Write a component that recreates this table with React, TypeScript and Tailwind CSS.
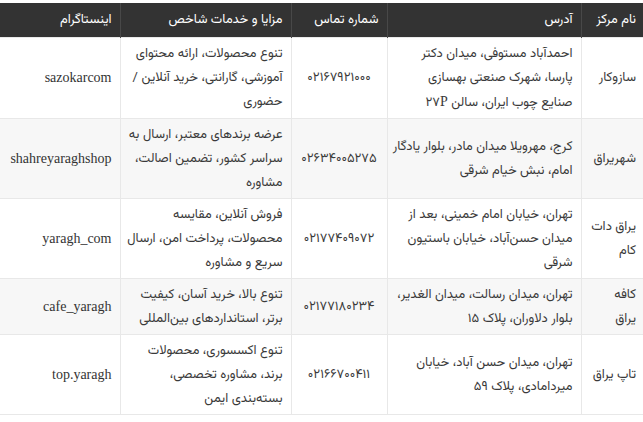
import React from "react";

type Row = {
  name: React.ReactNode[];
  address: React.ReactNode[];
  phone: string;
  features: string[];
  insta: string;
  grey?: boolean;
};

const rows: Row[] = [
  {
    name: ["سازوکار"],
    address: [
      "احمدآباد مستوفی، میدان دکتر",
      "پارسا، شهرک صنعتی بهسازی",
      <>
        صنایع چوب ایران، سالن ۲۷<span className="font-['Liberation_Serif',serif] text-[14px]">P</span>
      </>,
    ],
    phone: "۰۲۱۶۷۹۲۱۰۰۰",
    features: ["تنوع محصولات، ارائه محتوای", "آموزشی، گارانتی، خرید آنلاین /", "حضوری"],
    insta: "sazokarcom",
  },
  {
    name: ["شهریراق"],
    address: ["کرج، مهرویلا میدان مادر، بلوار یادگار", "امام، نبش خیام شرقی"],
    phone: "۰۲۶۳۴۰۰۵۲۷۵",
    features: ["عرضه برندهای معتبر، ارسال به", "سراسر کشور، تضمین اصالت،", "مشاوره"],
    insta: "shahreyaraghshop",
    grey: true,
  },
  {
    name: ["یراق دات", "کام"],
    address: ["تهران، خیابان امام خمینی، بعد از", "میدان حسن‌آباد، خیابان باستیون", "شرقی"],
    phone: "۰۲۱۷۷۴۰۹۰۷۲",
    features: ["فروش آنلاین، مقایسه", "محصولات، پرداخت امن، ارسال", "سریع و مشاوره"],
    insta: "yaragh_com",
  },
  {
    name: ["کافه", "یراق"],
    address: ["تهران، میدان رسالت، میدان الغدیر،", "بلوار دلاوران، پلاک ۱۵"],
    phone: "۰۲۱۷۷۱۸۰۲۳۴",
    features: ["تنوع بالا، خرید آسان، کیفیت", "برتر، استانداردهای بین‌المللی"],
    insta: "cafe_yaragh",
    grey: true,
  },
  {
    name: ["تاپ یراق"],
    address: ["تهران، میدان حسن آباد، خیابان", "میردامادی، پلاک ۵۹"],
    phone: "۰۲۱۶۶۷۰۰۴۱۱",
    features: ["تنوع اکسسوری، محصولات", "برند، مشاوره تخصصی،", "بسته‌بندی ایمن"],
    insta: "top.yaragh",
  },
];

function Lines({ lines }: { lines: React.ReactNode[] }) {
  return (
    <>
      {lines.map((l, i) => (
        <div key={i} className="whitespace-nowrap">
          {l}
        </div>
      ))}
    </>
  );
}

export default function App() {
  return (
    <div className="bg-white pt-[3px] w-[643px] h-[422px] overflow-hidden">
      <table
        dir="rtl"
        className="table-fixed border-collapse w-[643px] text-[13px] leading-[24px] text-[#3a3a3a] font-['Vazirmatn',sans-serif]"
      >
        <colgroup>
          <col className="w-[62px]" />
          <col className="w-[194px]" />
          <col className="w-[96px]" />
          <col className="w-[171px]" />
          <col className="w-[120px]" />
        </colgroup>
        <thead>
          <tr className="bg-[#333333] text-white">
            <th className="font-normal text-right px-[7px] py-[5px] border-l border-[#484848] whitespace-nowrap">نام مرکز</th>
            <th className="font-normal text-right px-[8px] py-[5px] border-l border-[#484848] whitespace-nowrap">آدرس</th>
            <th className="font-normal text-right px-[8px] py-[5px] border-l border-[#484848] whitespace-nowrap">شماره تماس</th>
            <th className="font-normal text-right px-[8px] py-[5px] border-l border-[#484848] whitespace-nowrap">مزایا و خدمات شاخص</th>
            <th className="font-normal text-right px-[8px] py-[5px] whitespace-nowrap">اینستاگرام</th>
          </tr>
        </thead>
        <tbody>
          {rows.map((r, i) => (
            <tr key={i} className={r.grey ? "bg-[#f7f7f7]" : "bg-white"}>
              <td className="align-middle text-right px-[7px] py-[3.5px] border border-[#e8e8e8] border-r-0">
                <Lines lines={r.name} />
              </td>
              <td className="align-middle text-right px-[8px] py-[3.5px] border border-[#e8e8e8]">
                <Lines lines={r.address} />
              </td>
              <td className="align-middle text-center px-[2px] py-[3.5px] border border-[#e8e8e8] text-[13px] tracking-[2.5px] whitespace-nowrap">
                {r.phone}
              </td>
              <td className="align-middle text-right px-[8px] py-[3.5px] border border-[#e8e8e8]">
                <Lines lines={r.features} />
              </td>
              <td className="align-middle text-right px-[8px] py-[3.5px] border border-[#e8e8e8] border-l-0 text-[14px] text-[#333] font-['Liberation_Serif',serif] whitespace-nowrap">
                {r.insta}
              </td>
            </tr>
          ))}
        </tbody>
      </table>
    </div>
  );
}
